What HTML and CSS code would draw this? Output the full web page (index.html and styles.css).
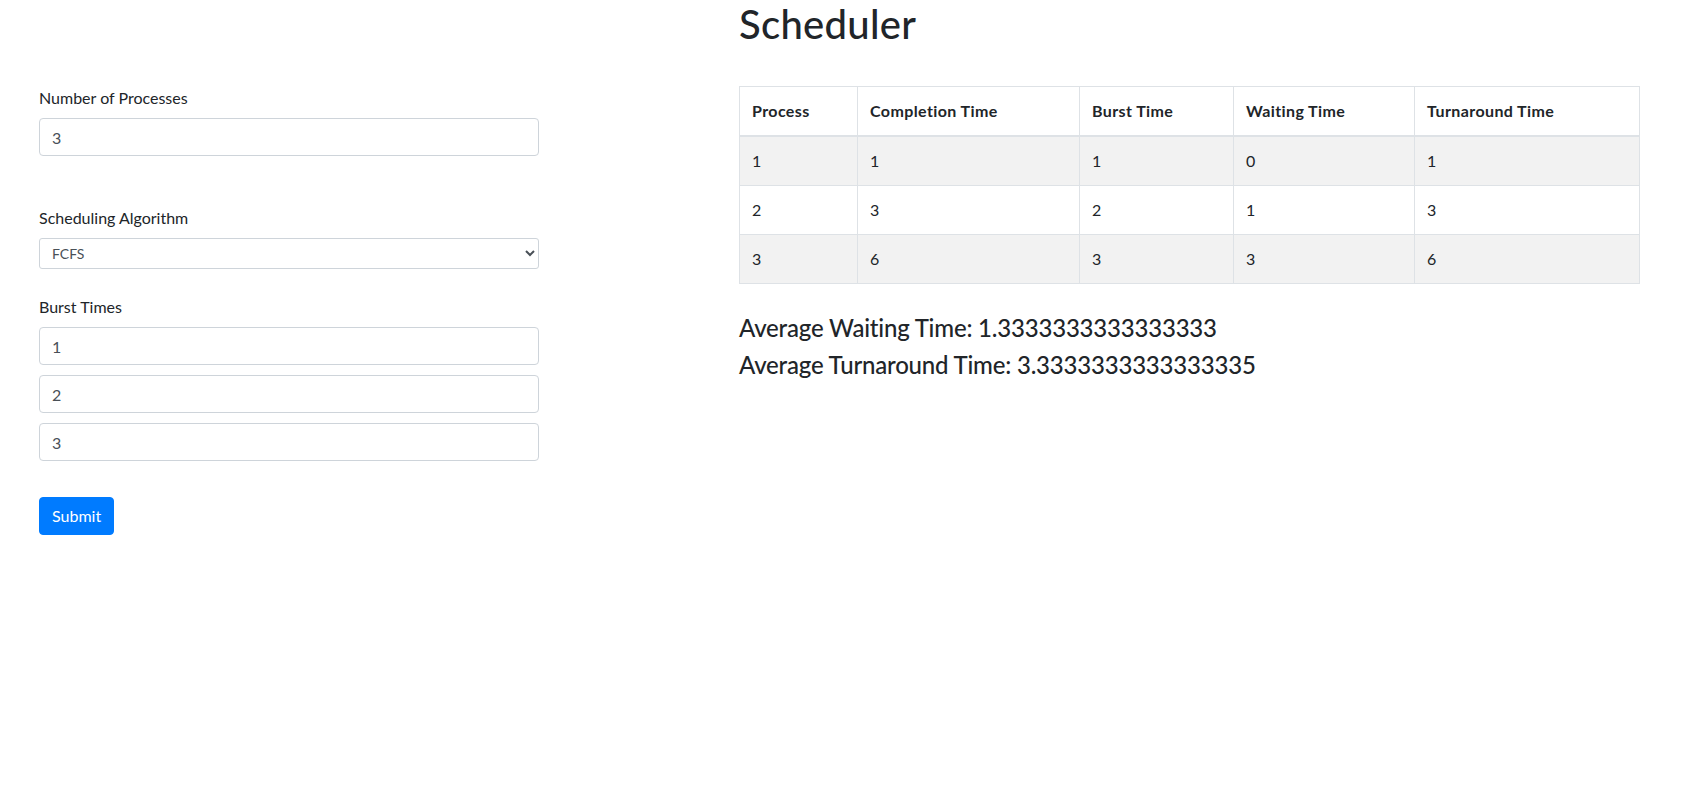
FILE: index.html
```html
<!DOCTYPE html>
<html lang="en">
<head>
<meta charset="utf-8">
<title>Scheduler</title>
<link rel="stylesheet" href="styles.css">
</head>
<body>
<div class="page">
  <form class="form-col">
    <div class="group">
      <label class="label" for="num">Number of Processes</label>
      <input class="control" id="num" type="text" value="3">
    </div>
    <div class="group group-algo">
      <label class="label" for="algo">Scheduling Algorithm</label>
      <select class="control control-sm" id="algo">
        <option>FCFS</option>
        <option>SJF</option>
        <option>Round Robin</option>
      </select>
    </div>
    <div class="group group-burst">
      <label class="label">Burst Times</label>
      <input class="control burst" type="text" value="1">
      <input class="control burst" type="text" value="2">
      <input class="control burst" type="text" value="3">
    </div>
    <button class="btn" type="button">Submit</button>
  </form>
  <main class="result-col">
    <h1 class="title">Scheduler</h1>
    <table class="table">
      <colgroup>
        <col class="c1"><col class="c2"><col class="c3"><col class="c4"><col class="c5">
      </colgroup>
      <thead>
        <tr><th>Process</th><th>Completion Time</th><th>Burst Time</th><th>Waiting Time</th><th>Turnaround Time</th></tr>
      </thead>
      <tbody>
        <tr class="odd"><td>1</td><td>1</td><td>1</td><td>0</td><td>1</td></tr>
        <tr><td>2</td><td>3</td><td>2</td><td>1</td><td>3</td></tr>
        <tr class="odd"><td>3</td><td>6</td><td>3</td><td>3</td><td>6</td></tr>
      </tbody>
    </table>
    <div class="averages">
      <h4 class="avg">Average Waiting Time: 1.3333333333333333</h4>
      <h4 class="avg">Average Turnaround Time: 3.3333333333333335</h4>
    </div>
  </main>
</div>
</body>
</html>
```
FILE: styles.css
```css
* { box-sizing: border-box; }
html, body { margin: 0; padding: 0; background: #fff; }
body {
  font-family: Lato, "Noto Sans", sans-serif;
  font-size: 16px;
  line-height: 24px;
  color: #212529;
}
.page {
  display: flex;
  align-items: flex-start;
}
.form-col {
  width: 500px;
  margin-left: 39px;
  padding-top: 86px;
  display: flex;
  flex-direction: column;
}
.group { display: flex; flex-direction: column; }
.group-algo { margin-top: 50px; }
.group-burst { margin-top: 26px; }
.label {
  display: block;
  margin-bottom: 8px;
  line-height: 24px;
}
.control {
  display: block;
  width: 100%;
  height: 38px;
  padding: 6px 12px;
  font-family: inherit;
  font-size: 16px;
  line-height: 24px;
  color: #495057;
  background: #fff;
  border: 1px solid #ced4da;
  border-radius: 4px;
  outline: none;
}
.control-sm {
  height: 31px;
  padding: 4px 8px;
  font-size: 14px;
  line-height: 21px;
  border-radius: 3px;
}
.burst + .burst { margin-top: 10px; }
.btn {
  align-self: flex-start;
  margin-top: 36px;
  height: 38px;
  padding: 6px 12px;
  font-family: inherit;
  font-size: 16px;
  line-height: 24px;
  color: #fff;
  background: #007bff;
  border: 1px solid #007bff;
  border-radius: 4px;
  cursor: pointer;
}
.result-col {
  margin-left: 200px;
  width: 900px;
}
.title {
  margin: 0 0 38px;
  font-size: 40px;
  line-height: 48px;
  font-weight: 500;
  height: 48px;
  letter-spacing: 0.3px;
}
.table {
  width: 900px;
  table-layout: fixed;
  border-collapse: collapse;
  margin-bottom: 16px;
}
.c1 { width: 118px; }
.c2 { width: 222px; }
.c3 { width: 154px; }
.c4 { width: 181px; }
.c5 { width: 225px; }
.table th, .table td {
  padding: 12px;
  border: 1px solid #dee2e6;
  text-align: left;
  vertical-align: top;
  line-height: 24px;
}
.table th { font-weight: 700; letter-spacing: 0.4px; }
.table thead th { border-bottom-width: 2px; }
.table tr.odd { background: #f2f2f2; }
.averages { padding-top: 14px; }
.avg {
  margin: 0 0 8px;
  font-size: 24px;
  line-height: 28.8px;
  font-weight: 500;
  letter-spacing: -0.2px;
}
```
